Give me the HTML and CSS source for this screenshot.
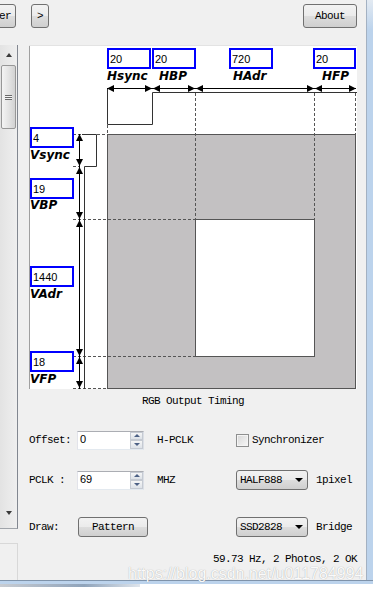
FILE: index.html
```html
<!DOCTYPE html>
<html lang="en">
<head>
    <meta charset="UTF-8">
    <title>RGB Output Timing</title>
    <link rel="stylesheet" href="styles.css">
</head>
<body>

    <div class="window">
        <div class="client">

            <div class="toolbar">
                <button class="btn btn-prev">Filter</button>
                <button class="btn btn-next">&gt;</button>
                <button class="btn btn-about">About</button>
            </div>

            <div class="main">
                <div class="side">
                    <div class="listbox">
                        <div class="scrollbar">
                            <div class="sb-btn"><span class="tri-up"></span></div>
                            <div class="sb-thumb"><span class="grip"></span></div>
                            <div class="sb-track"></div>
                            <div class="sb-btn"><span class="tri-down"></span></div>
                        </div>
                    </div>
                    <div class="sidebox"></div>
                </div>

                <div class="panel">
                    <div class="canvas">
                        <svg class="timing" width="328" height="344" viewBox="0 0 328 344">
                            <line x1="0.5" y1="0" x2="0.5" y2="344" stroke="#a0a0a0"/>
                            <line x1="0" y1="0.5" x2="328" y2="0.5" stroke="#e3e3e3"/>
                            <rect x="78.5" y="89.5" width="248" height="254" fill="#c3c1c2" stroke="#555"/>
                            <rect x="166.5" y="174.5" width="119" height="137" fill="#fff" stroke="#555"/>

                            <!-- dashed guides -->
                            <g stroke="#555" stroke-dasharray="3 2" fill="none">
                                <line x1="78.5" y1="80" x2="78.5" y2="89"/>
                                <line x1="166.5" y1="48" x2="166.5" y2="174"/>
                                <line x1="285.5" y1="48" x2="285.5" y2="174"/>
                                <line x1="326.5" y1="48" x2="326.5" y2="89"/>
                                <line x1="44" y1="89.5" x2="53" y2="89.5"/>
                                <line x1="68" y1="89.5" x2="78" y2="89.5"/>
                                <line x1="44" y1="121.5" x2="50" y2="121.5"/>
                                <line x1="44" y1="174.5" x2="166" y2="174.5"/>
                                <line x1="44" y1="311.5" x2="166" y2="311.5"/>
                                <line x1="44" y1="343.5" x2="78" y2="343.5"/>
                            </g>

                            <!-- sync pulses -->
                            <g stroke="#333" fill="none">
                                <polyline points="78.5,43.5 78.5,79.5 123.5,79.5 123.5,47.5 328,47.5"/>
                                <polyline points="53,89.5 67.5,89.5 67.5,121.5 55.5,121.5 55.5,344"/>
                            </g>

                            <!-- dimension arrows -->
                            <g stroke="#000">
                                <line x1="78" y1="43.5" x2="327" y2="43.5"/>
                                <line x1="50.5" y1="89" x2="50.5" y2="344"/>
                            </g>
                            <g fill="#000">
                                <polygon points="78,43.5 85,40 85,47"/>
                                <polygon points="123,43.5 116,40 116,47"/>
                                <polygon points="124,43.5 131,40 131,47"/>
                                <polygon points="166,43.5 159,40 159,47"/>
                                <polygon points="167,43.5 174,40 174,47"/>
                                <polygon points="285,43.5 278,40 278,47"/>
                                <polygon points="286,43.5 293,40 293,47"/>
                                <polygon points="327,43.5 320,40 320,47"/>

                                <polygon points="50.5,89 47,96 54,96"/>
                                <polygon points="50.5,121 47,114 54,114"/>
                                <polygon points="50.5,122 47,129 54,129"/>
                                <polygon points="50.5,174 47,167 54,167"/>
                                <polygon points="50.5,175 47,182 54,182"/>
                                <polygon points="50.5,311 47,304 54,304"/>
                                <polygon points="50.5,312 47,319 54,319"/>
                                <polygon points="50.5,343 47,336 54,336"/>
                            </g>
                        </svg>

                        <input class="val hsync" type="text" value="20">
                        <input class="val hbp" type="text" value="20">
                        <input class="val hadr" type="text" value="720">
                        <input class="val hfp" type="text" value="20">
                        <span class="sig sig-hsync">Hsync</span>
                        <span class="sig sig-hbp">HBP</span>
                        <span class="sig sig-hadr">HAdr</span>
                        <span class="sig sig-hfp">HFP</span>

                        <input class="val vsync" type="text" value="4">
                        <input class="val vbp" type="text" value="19">
                        <input class="val vadr" type="text" value="1440">
                        <input class="val vfp" type="text" value="18">
                        <span class="sig sig-vsync">Vsync</span>
                        <span class="sig sig-vbp">VBP</span>
                        <span class="sig sig-vadr">VAdr</span>
                        <span class="sig sig-vfp">VFP</span>
                    </div>

                    <div class="caption">RGB Output Timing</div>

                    <div class="ctl-row row-offset">
                        <span class="lbl">Offset:</span>
                        <div class="spin">
                            <span class="spin-val">0</span>
                            <div class="spin-btns"><span class="up"></span><span class="down"></span></div>
                        </div>
                        <span class="unit">H-PCLK</span>
                        <span class="check"></span>
                        <span>Synchronizer</span>
                    </div>

                    <div class="ctl-row row-pclk">
                        <span class="lbl">PCLK :</span>
                        <div class="spin">
                            <span class="spin-val">69</span>
                            <div class="spin-btns"><span class="up"></span><span class="down"></span></div>
                        </div>
                        <span class="unit">MHZ</span>
                        <div class="combo"><span class="combo-text">HALF888</span><span class="combo-arrow"></span></div>
                        <span>1pixel</span>
                    </div>

                    <div class="ctl-row row-draw">
                        <span class="lbl lbl-draw">Draw:</span>
                        <button class="btn btn-pattern">Pattern</button>
                        <div class="combo combo-bridge"><span class="combo-text">SSD2828</span><span class="combo-arrow"></span></div>
                        <span>Bridge</span>
                    </div>

                    <div class="status">59.73 Hz, 2 Photos, 2 OK</div>
                </div>
            </div>
        </div>
        <div class="frame-right"></div>
    </div>
    <div class="frame-bottom"><span class="shadow"></span></div>

    <div class="watermark">https://blog.csdn.net/u011784994</div>

</body>
</html>
```

FILE: styles.css
```css
* {
    box-sizing: border-box;
    margin: 0;
    padding: 0;
}
body {
    width: 373px;
    height: 594px;
    overflow: hidden;
    position: relative;
    background-color: #f0f0f0;
    font-family: "Liberation Mono", monospace;
    font-size: 11px;
    letter-spacing: -0.6px;
    color: #000;
}
.window {
    display: flex;
    height: 580px;
}
.client {
    width: 366px;
    display: flex;
    flex-direction: column;
}
.frame-right {
    width: 7px;
    border-left: 1px solid #a3b1c2;
    background: linear-gradient(#e3eaf2, #bcd3ec 30px);
}
.frame-bottom {
    position: relative;
    height: 14px;
    border-top: 1px solid #7f93aa;
    background: linear-gradient(#bcd3ec 0, #bcd3ec 3px, #ffffff 3px);
}
.frame-bottom .shadow {
    position: absolute;
    left: 0;
    top: 3px;
    width: 140px;
    height: 3px;
    background: linear-gradient(90deg, #c8ccd2, #8fa3ba 60%, #dfe5ec);
}

/* toolbar */
.toolbar {
    height: 45px;
    display: flex;
    align-items: flex-start;
    padding: 4px 9px 0 0;
}
.btn {
    height: 24px;
    border: 1px solid #707070;
    border-radius: 3px;
    background: linear-gradient(#f2f2f2 0%, #ebebeb 50%, #dddddd 51%, #cfcfcf 100%);
    font-family: inherit;
    font-size: 11px;
    letter-spacing: inherit;
    color: #000;
}
.btn-prev {
    width: 46px;
    margin-left: -30px;
}
.btn-next {
    width: 18px;
    margin-left: 15px;
}
.btn-about {
    width: 54px;
    margin-left: auto;
}

.main {
    flex: 1;
    display: flex;
}

/* left list */
.side {
    width: 18px;
    display: flex;
    flex-direction: column;
}
.listbox {
    height: 484px;
    border-right: 1px solid #828790;
    border-bottom: 1px solid #a0a4aa;
}
.scrollbar {
    height: 100%;
    width: 17px;
    display: flex;
    flex-direction: column;
    padding-bottom: 5px;
    background: linear-gradient(90deg, #e3e3e3, #efefef);
}
.sb-btn {
    height: 20px;
    display: flex;
    align-items: center;
    justify-content: center;
}
.tri-up {
    border-left: 3px solid transparent;
    border-right: 3px solid transparent;
    border-bottom: 4px solid #3a3a3a;
}
.tri-down {
    border-left: 3px solid transparent;
    border-right: 3px solid transparent;
    border-top: 4px solid #3a3a3a;
}
.sb-thumb {
    height: 64px;
    margin: 0 1px 0 1px;
    border: 1px solid #979797;
    border-radius: 2px;
    background: linear-gradient(90deg, #f4f4f4, #e4e4e4 50%, #d2d2d2);
    display: flex;
    align-items: center;
    justify-content: center;
}
.grip {
    width: 7px;
    height: 5px;
    border-top: 1px solid #6a6a6a;
    border-bottom: 1px solid #6a6a6a;
    background: linear-gradient(#f4f4f4 0, #f4f4f4 1px, #6a6a6a 1px, #6a6a6a 2px, #f4f4f4 2px);
}
.sb-track {
    flex: 1;
}
.sidebox {
    margin-top: 14px;
    flex: 1;
    border-top: 1px solid #d8d8d8;
    border-right: 1px solid #d8d8d8;
}

/* main panel */
.panel {
    width: 328px;
    margin-left: 11px;
    display: flex;
    flex-direction: column;
}
.canvas {
    position: relative;
    width: 328px;
    height: 344px;
    background: #fff;
}
.timing {
    display: block;
}
.val {
    position: absolute;
    width: 44px;
    height: 21px;
    border: 2px solid #0000ff;
    padding: 0 1px;
    font-family: "Liberation Sans", Arial, sans-serif;
    font-size: 11px;
    letter-spacing: 0;
    color: #000;
    background: #fff;
    outline: none;
}
.hsync { left: 78px; top: 3px; }
.hbp { left: 123px; top: 3px; }
.hadr { left: 200px; top: 3px; }
.hfp { left: 284px; top: 3px; width: 43px; }
.vsync { left: 1px; top: 82px; }
.vbp { left: 1px; top: 133px; }
.vadr { left: 1px; top: 221px; }
.vfp { left: 1px; top: 306px; }

.sig {
    position: absolute;
    font-family: "DejaVu Sans", Verdana, sans-serif;
    font-size: 12px;
    font-weight: bold;
    font-style: italic;
    line-height: 14px;
    letter-spacing: 0;
}
.sig-hsync { left: 78px; top: 24px; }
.sig-hbp { left: 130px; top: 24px; }
.sig-hadr { left: 204px; top: 24px; }
.sig-hfp { left: 293px; top: 24px; }
.sig-vsync { left: 1px; top: 103px; }
.sig-vbp { left: 1px; top: 153px; }
.sig-vadr { left: 1px; top: 242px; }
.sig-vfp { left: 1px; top: 327px; }

.caption {
    margin-top: 5px;
    line-height: 14px;
    text-align: center;
}

/* controls */
.ctl-row {
    display: flex;
    align-items: center;
    height: 20px;
    white-space: nowrap;
}
.row-offset {
    margin-top: 22px;
}
.row-pclk {
    margin-top: 20px;
}
.row-draw {
    margin-top: 27px;
}
.lbl {
    width: 48px;
}
.lbl-draw {
    width: 49px;
}
.spin {
    width: 67px;
    height: 19px;
    display: flex;
    border: 1px solid #abadb3;
    border-color: #abadb3 #dbdfe6 #e3e9ef #e2e3ea;
    background: #fff;
}
.spin-val {
    flex: 1;
    padding-left: 2px;
    font-family: "Liberation Sans", Arial, sans-serif;
    font-size: 11px;
    letter-spacing: 0;
    line-height: 15px;
}
.spin-btns {
    width: 13px;
    display: flex;
    flex-direction: column;
}
.spin-btns span {
    flex: 1;
    border: 1px solid #c5cad2;
    background: linear-gradient(#f6f6f6, #dde2e8);
    display: flex;
    align-items: center;
    justify-content: center;
}
.spin-btns .up::after {
    content: "";
    border-left: 3px solid transparent;
    border-right: 3px solid transparent;
    border-bottom: 3px solid #4d6185;
}
.spin-btns .down::after {
    content: "";
    border-left: 3px solid transparent;
    border-right: 3px solid transparent;
    border-top: 3px solid #4d6185;
}
.unit {
    width: 79px;
    margin-left: 13px;
}
.check {
    width: 13px;
    height: 13px;
    margin-right: 3px;
    border: 1px solid #8e8f8f;
    background: linear-gradient(135deg, #d6d6d6, #f8f8f8);
    box-shadow: inset 0 0 0 1px #f4f4f4;
}
.combo {
    width: 72px;
    height: 20px;
    margin-right: 8px;
    display: flex;
    align-items: center;
    padding: 0 4px 0 3px;
    border: 1px solid #707070;
    border-radius: 3px;
    background: linear-gradient(#f2f2f2 0%, #ebebeb 50%, #dddddd 51%, #cfcfcf 100%);
}
.combo-text {
    flex: 1;
}
.combo-arrow {
    border-left: 4px solid transparent;
    border-right: 4px solid transparent;
    border-top: 4px solid #000;
}
.btn-pattern {
    width: 70px;
    height: 20px;
}
.combo-bridge {
    margin-left: 88px;
}
.status {
    margin-top: 15px;
    line-height: 14px;
    text-align: right;
}

.watermark {
    position: absolute;
    left: 128px;
    top: 565px;
    font-family: "Liberation Sans", Arial, sans-serif;
    font-size: 16px;
    line-height: 18px;
    letter-spacing: 0;
    color: #fafafa;
    text-shadow: 0 0 1px rgba(0, 0, 0, 0.35);
}
```
